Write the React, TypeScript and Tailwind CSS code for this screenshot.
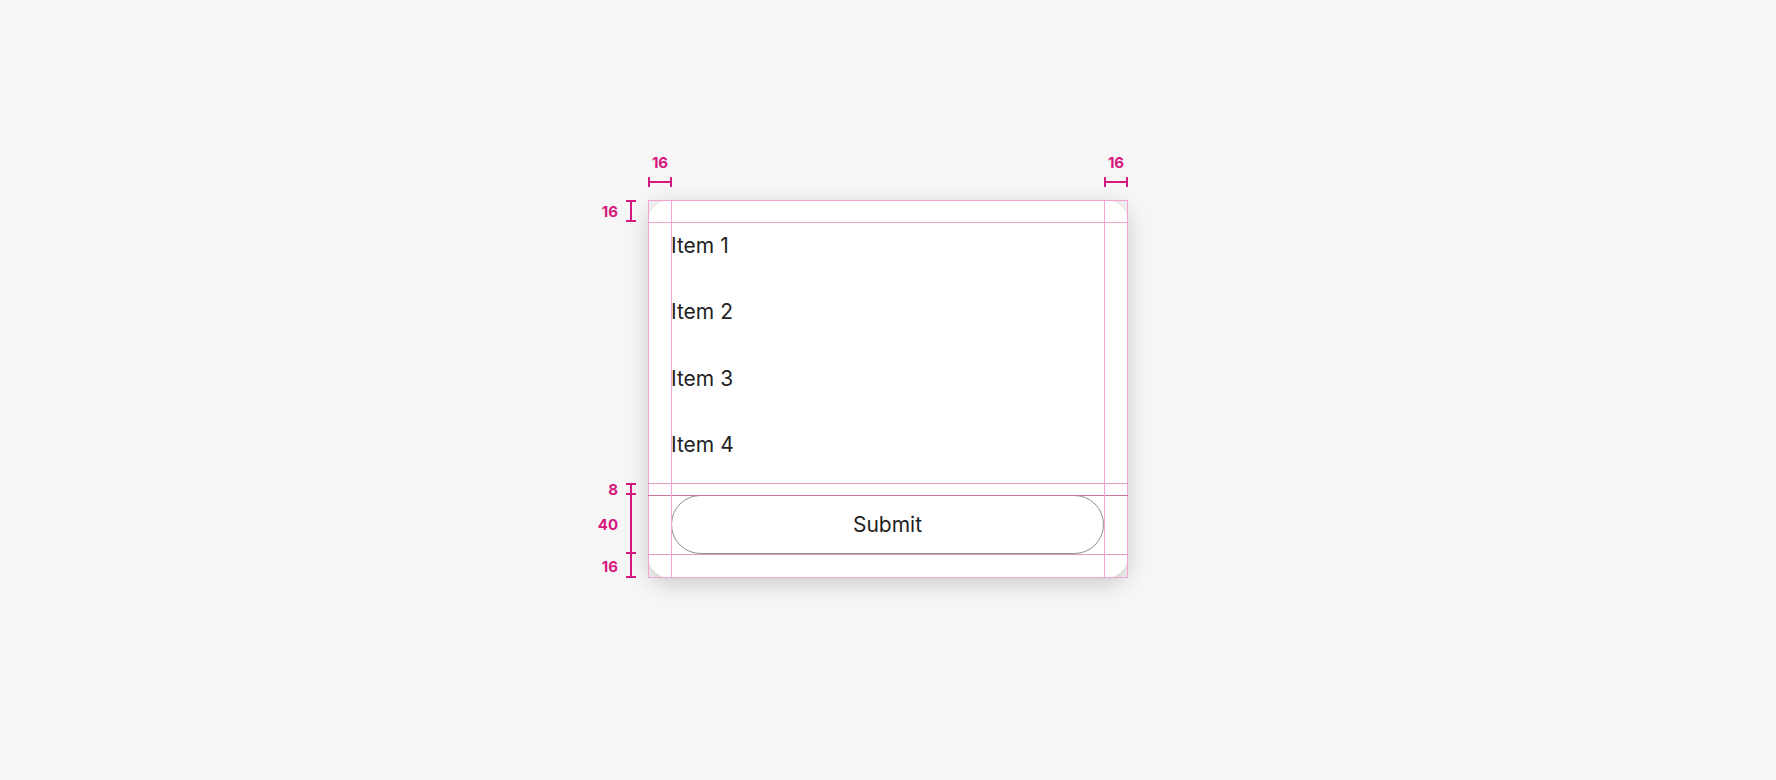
const items = ["Item 1", "Item 2", "Item 3", "Item 4"];

const pink = "bg-[#d6197f]";

// one segment of a vertical measurement: label, then a bar the segment's height
function VSegment({ label, height, topTick = true }: { label: string; height: string; topTick?: boolean }) {
  return (
    <div className={`flex items-center justify-end gap-[8px] pr-[12px] ${height}`}>
      <span className="shrink-0 text-[15px] font-bold leading-[15px] text-[#d6197f]">{label}</span>
      <div className="flex h-full w-[10px] shrink-0 flex-col items-center">
        {topTick && <div className={`h-[2px] w-full shrink-0 ${pink}`} />}
        <div className={`w-[2px] flex-1 ${pink}`} />
        <div className={`h-[2px] w-full shrink-0 ${pink}`} />
      </div>
    </div>
  );
}

function HSegment({ label }: { label: string }) {
  return (
    <div className="flex w-[24px] flex-col items-center gap-[7px]">
      <span className="text-[15px] font-bold leading-[15px] text-[#d6197f]">{label}</span>
      <div className="flex h-[10px] w-full items-center">
        <div className={`h-full w-[2px] shrink-0 ${pink}`} />
        <div className={`h-[2px] flex-1 ${pink}`} />
        <div className={`h-full w-[2px] shrink-0 ${pink}`} />
      </div>
    </div>
  );
}

export default function App() {
  return (
    <div className="flex h-[780px] w-full justify-center bg-[#f6f6f6] pt-[155px] font-['Inter',sans-serif]">
      <div className="grid grid-cols-[44px_480px_44px] grid-rows-[45px_378px]">
        {/* top measurements */}
        <div />
        <div className="flex justify-between">
          <HSegment label="16" />
          <HSegment label="16" />
        </div>
        <div />

        {/* left measurements */}
        <div className="flex flex-col">
          <VSegment label="16" height="h-[22px]" />
          <div className="flex-1" />
          <VSegment label="8" height="h-[12px]" />
          <VSegment label="40" height="h-[59px]" topTick={false} />
          <VSegment label="16" height="h-[24px]" topTick={false} />
        </div>

        {/* Card */}
        <div className="relative">
          <div className="flex h-[378px] w-[480px] flex-col rounded-[22px] bg-white pb-[24px] pl-[23px] pr-[24px] pt-[22px] shadow-[0_6px_22px_rgba(0,0,0,0.18)]">
            <ul className="flex h-[261px] flex-col gap-[19.33px] pb-[15px]">
              {items.map((item) => (
                <li key={item} className="h-[47px] text-[21px] leading-[47px] text-[#1f1f1f]">
                  {item}
                </li>
              ))}
            </ul>
            <button className="mt-[12px] h-[59px] w-full rounded-full border border-[#8e8e8e] bg-white text-[21px] text-[#1f1f1f]">
              Submit
            </button>
          </div>

          {/* spec guide lines drawn over the card */}
          <div className="pointer-events-none absolute inset-0 border border-[#f2a6cf]" />
          <div className="pointer-events-none absolute left-0 top-[22px] h-px w-full bg-[#f2a6cf]" />
          <div className="pointer-events-none absolute left-0 top-[283px] h-px w-full bg-[#e39bc3]" />
          <div className="pointer-events-none absolute left-0 top-[295px] h-px w-full bg-[#c7769f]" />
          <div className="pointer-events-none absolute left-0 top-[354px] h-px w-full bg-[#e39bc3]" />
          <div className="pointer-events-none absolute left-[23px] top-0 h-full w-px bg-[#f2a6cf]" />
          <div className="pointer-events-none absolute left-[456px] top-0 h-full w-px bg-[#f2a6cf]" />
        </div>
        <div />
      </div>
    </div>
  );
}
